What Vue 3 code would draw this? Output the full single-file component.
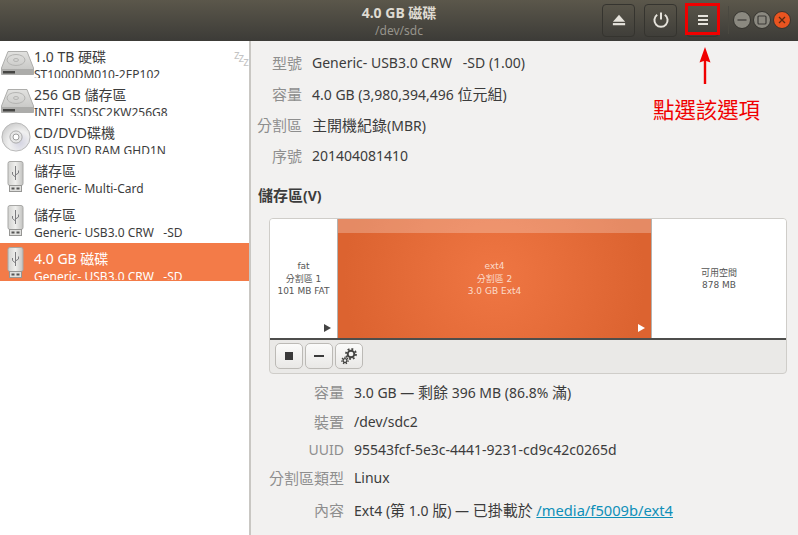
<template>
  <div class="window">
    <!-- title bar -->
    <header class="titlebar">
      <div></div>
      <div class="title">
        <div class="title-main">4.0 GB 磁碟</div>
        <div class="title-sub">/dev/sdc</div>
      </div>
      <div class="actions">
        <button class="hbtn">
          <svg width="14" height="14" viewBox="0 0 16 16"><path d="M8 2 15 10H1z" fill="#e6e3dc"/><rect x="1" y="11.5" width="14" height="2.5" fill="#e6e3dc"/></svg>
        </button>
        <button class="hbtn">
          <svg width="18" height="18" viewBox="0 0 18 18" fill="none" stroke="#e6e3dc" stroke-width="2"><path d="M5.2 3.8a6.6 6.6 0 1 0 7.6 0"/><path d="M9 1.5v7"/></svg>
        </button>
        <button class="hbtn">
          <svg width="12" height="12" viewBox="0 0 12 12" fill="#e6e3dc"><rect x="1" y="1" width="10" height="2"/><rect x="1" y="5" width="10" height="2"/><rect x="1" y="9" width="10" height="2"/></svg>
        </button>
        <span class="sep"></span>
        <span class="wbtn">
          <svg width="10" height="10" viewBox="0 0 10 10"><rect x="0.5" y="4.4" width="9" height="1.2" fill="#3c3b37"/></svg>
        </span>
        <span class="wbtn">
          <svg width="10" height="10" viewBox="0 0 10 10" fill="none" stroke="#3c3b37" stroke-width="1.2"><rect x="1" y="1" width="8" height="8" rx="1"/></svg>
        </span>
        <span class="wbtn close">
          <svg width="10" height="10" viewBox="0 0 10 10" stroke="#5a2a12" stroke-width="1.3"><path d="M2 2l6 6M8 2l-6 6"/></svg>
        </span>
      </div>
    </header>

    <div class="body">
      <!-- drive list -->
      <aside class="sidebar">
        <div
          v-for="d in drives"
          :key="d.name + d.sub"
          class="drive"
          :class="{ selected: d.selected, tall: d.tall }"
        >
          <div class="slot">
            <svg v-if="d.icon === 'hdd'" class="hdd" width="33" height="24" viewBox="0 0 33 24">
              <defs>
                <linearGradient id="hddTop" x1="0" y1="0" x2="0" y2="1"><stop offset="0" stop-color="#e2e2e0"/><stop offset="1" stop-color="#c2c2c0"/></linearGradient>
              </defs>
              <path d="M7 .5h19L32.5 17v6.5H.5V17z" fill="url(#hddTop)" stroke="#adadab"/>
              <ellipse cx="15" cy="9" rx="9" ry="5.5" fill="none" stroke="#b4b4b2"/>
              <ellipse cx="15" cy="9" rx="2.5" ry="1.5" fill="none" stroke="#b4b4b2"/>
              <rect x="1" y="18" width="31" height="5" fill="#acacaa"/>
              <rect x="2" y="20" width="12" height="2.5" fill="#454543"/>
            </svg>
            <svg v-else-if="d.icon === 'cd'" class="cd" width="30" height="30" viewBox="0 0 32 32">
              <defs>
                <radialGradient id="cdDisc" cx="0.65" cy="0.7" r="0.8"><stop offset="0" stop-color="#d4d4e2"/><stop offset="0.5" stop-color="#f0f0f0"/><stop offset="1" stop-color="#c8c8c8"/></radialGradient>
              </defs>
              <circle cx="16" cy="16" r="15" fill="url(#cdDisc)" stroke="#b4b4b4"/>
              <circle cx="16" cy="16" r="6.5" fill="#e6e6e6" stroke="#a6a6a6"/>
              <circle cx="16" cy="16" r="3.2" fill="#fff" stroke="#969696"/>
            </svg>
            <svg v-else class="usb" width="17" height="31" viewBox="0 0 17 31">
              <defs>
                <linearGradient id="usbBody" x1="0" y1="0" x2="1" y2="0"><stop offset="0" stop-color="#d2d2d0"/><stop offset="0.5" stop-color="#efefed"/><stop offset="1" stop-color="#c2c2c0"/></linearGradient>
              </defs>
              <rect x="1" y=".5" width="15" height="24" rx="2" fill="url(#usbBody)" stroke="#a8a8a6"/>
              <path d="M8.5 5v14M8.5 16l-3-2.5V11M8.5 14l3-2V9.5" fill="none" stroke="#7c7c7f"/>
              <rect x="2.5" y="24.5" width="12" height="6" fill="#e0e0de" stroke="#969694"/>
              <rect x="4.5" y="26.5" width="3" height="2" fill="#555"/>
              <rect x="9.5" y="26.5" width="3" height="2" fill="#555"/>
            </svg>
          </div>
          <div class="drive-text">
            <div class="drive-name">{{ d.name }}</div>
            <div class="drive-sub">{{ d.sub }}</div>
          </div>
          <span v-if="d.sleep" class="zzz"><i>z</i><i>z</i><i>z</i></span>
        </div>
      </aside>

      <main class="main">
        <div class="info">
          <template v-for="r in driveInfo" :key="r[0]">
            <div class="label"><span v-for="(p, i) in runs(r[0])" :key="i" :class="{ cjk: i % 2 }">{{ p }}</span></div>
            <div class="value"><span v-for="(p, i) in runs(r[1])" :key="i" :class="{ cjk: i % 2 }">{{ p }}</span></div>
          </template>
        </div>

        <h3 class="heading"><span class="cjk">儲存區</span>(V)</h3>

        <section class="volumes">
          <div class="bar">
            <div class="part fat">
              <div class="fs">fat</div>
              <div>分割區 1</div>
              <div>101 MB FAT</div>
              <span class="tri"></span>
            </div>
            <div class="part ext">
              <div class="used"></div>
              <div class="fs">ext4</div>
              <div>分割區 2</div>
              <div>3.0 GB Ext4</div>
              <span class="tri white"></span>
            </div>
            <div class="part free">
              <div>可用空間</div>
              <div>878 MB</div>
            </div>
          </div>
          <div class="tools">
            <button class="tool"><span class="stop"></span></button>
            <button class="tool"><span class="minus"></span></button>
            <button class="tool">
              <svg width="18" height="18" viewBox="0 0 18 18" fill="none" stroke="#454543">
                <circle cx="11" cy="7" r="3.3" stroke-width="1.9"/>
                <circle cx="11" cy="7" r="5" stroke-width="1.8" stroke-dasharray="1.9 2"/>
                <circle cx="5" cy="13.5" r="1.9" stroke-width="1.3"/>
                <circle cx="5" cy="13.5" r="3.2" stroke-width="1.3" stroke-dasharray="1.4 1.4"/>
              </svg>
            </button>
          </div>
        </section>

        <div class="info details">
          <template v-for="r in partInfo" :key="r[0]">
            <div class="label"><span v-for="(p, i) in runs(r[0])" :key="i" :class="{ cjk: i % 2 }">{{ p }}</span></div>
            <div class="value"><span v-for="(p, i) in runs(r[1])" :key="i" :class="{ cjk: i % 2 }">{{ p }}</span><a v-if="r[2]" class="link" href="#">{{ r[2] }}</a></div>
          </template>
        </div>
      </main>
    </div>

    <!-- red annotation added on top of the screenshot -->
    <span class="mark"></span>
    <svg class="arrow" width="14" height="38" viewBox="0 0 14 38"><path d="M7 0 12.5 15.5 8.2 14V37H5.8V14L1.5 15.5z" fill="#f00000"/></svg>
    <span class="note">點選該選項</span>
  </div>
</template>

<script setup>
const drives = [
  { name: '1.0 TB 硬碟', sub: 'ST1000DM010-2EP102', icon: 'hdd', sleep: true },
  { name: '256 GB 儲存區', sub: 'INTEL SSDSC2KW256G8', icon: 'hdd' },
  { name: 'CD/DVD碟機', sub: 'ASUS DVD RAM GHD1N', icon: 'cd' },
  { name: '儲存區', sub: 'Generic- Multi-Card', icon: 'usb', tall: true },
  { name: '儲存區', sub: 'Generic- USB3.0 CRW   -SD', icon: 'usb', tall: true },
  { name: '4.0 GB 磁碟', sub: 'Generic- USB3.0 CRW   -SD', icon: 'usb', selected: true }
]

const driveInfo = [
  ['型號', 'Generic- USB3.0 CRW   -SD (1.00)'],
  ['容量', '4.0 GB (3,980,394,496 位元組)'],
  ['分割區', '主開機紀錄(MBR)'],
  ['序號', '201404081410']
]

const partInfo = [
  ['容量', '3.0 GB — 剩餘 396 MB (86.8% 滿)'],
  ['裝置', '/dev/sdc2'],
  ['UUID', '95543fcf-5e3c-4441-9231-cd9c42c0265d'],
  ['分割區類型', 'Linux'],
  ['內容', 'Ext4 (第 1.0 版) — 已掛載於 ', '/media/f5009b/ext4']
]

// Han characters run a bit larger than the latin text, so split them out
const runs = (text) => text.split(/([\u2E80-\u9FFF]+)/)
</script>

<style>
html, body { margin: 0; overflow: hidden; }
</style>

<style scoped>
.window {
  position: relative;
  width: 798px;
  height: 535px;
  display: flex;
  flex-direction: column;
  overflow: hidden;
  background: #f2f1f0;
  color: #3c3c3c;
  font-family: "Noto Sans", "Noto Sans CJK TC", sans-serif;
  font-size: 14px;
}

.titlebar {
  height: 41px;
  flex: none;
  display: grid;
  grid-template-columns: 1fr auto 1fr;
  align-items: center;
  background: linear-gradient(#5b574b, #3c3b37);
}
.title { text-align: center; }
.title-main { color: #dfdbd2; font-weight: 700; font-size: 14px; line-height: 20px; }
.title-sub { color: #97948c; font-size: 12px; line-height: 16px; }

.actions {
  display: flex;
  align-items: center;
  justify-content: flex-end;
  padding-right: 7px;
  margin-bottom: 1px;
}
.hbtn {
  width: 33px;
  height: 33px;
  margin-right: 9px;
  padding: 0;
  display: flex;
  align-items: center;
  justify-content: center;
  border: 1px solid #35342f;
  border-radius: 4px;
  background: transparent;
}
.sep { width: 1px; height: 28px; margin-right: 2px; background: #4a4840; }
.wbtn {
  box-sizing: border-box;
  width: 18px;
  height: 18px;
  margin-left: 2px;
  display: flex;
  align-items: center;
  justify-content: center;
  border-radius: 50%;
  background: #8b8980;
  border: 1px solid #35342f;
}
.close { background: #e95420; }

.body { flex: 1; display: flex; min-height: 0; }

.sidebar {
  width: 249px;
  flex: none;
  background: #fff;
  border-right: 2px solid #c9c7c3;
}
.drive {
  position: relative;
  height: 38px;
  display: flex;
  overflow: hidden;
}
.drive.tall { height: 44px; }
.drive.selected { background: #f37b48; color: #fff; }
.slot { width: 34px; flex: none; }
.slot svg { display: block; }
.hdd { margin: 10px 0 0 1px; }
.cd { margin: 5px 0 0 1px; }
.usb { margin: 6px 0 0 7px; }
.selected .usb { margin-top: 4px; }
.drive-text { height: 31px; margin-top: 6px; overflow: hidden; white-space: pre; }
.tall .drive-text { height: auto; }
.drive-name { font-size: 14px; line-height: 20px; }
.drive-sub { font-size: 12px; line-height: 16px; }
.zzz {
  position: absolute;
  left: 234px;
  top: 9px;
  display: flex;
  color: #c4c4c4;
  font-size: 12px;
  line-height: 10px;
}
.zzz i { font-style: normal; width: 4.6px; }
.zzz i:nth-child(2) { margin-top: 3px; }
.zzz i:nth-child(3) { margin-top: 7px; }

.main { flex: 1; min-width: 0; padding: 6px 11px 0 6px; }

.cjk { font-size: 15px; }

.info {
  display: grid;
  grid-template-columns: 45px 1fr;
  column-gap: 10px;
  grid-auto-rows: 31px;
  align-items: center;
}
.label { text-align: right; color: #8e8e8e; }
.value { white-space: pre; }

.heading { margin: 14px 0 12px 1px; font-size: 14px; line-height: 20px; font-weight: 700; }

.volumes {
  margin-left: 12px;
  height: 156px;
  display: flex;
  flex-direction: column;
  box-sizing: border-box;
  border: 1px solid #cfcdc9;
  border-radius: 4px;
  background: #eae9e7;
  overflow: hidden;
}
.bar {
  height: 119px;
  flex: none;
  display: flex;
  border-bottom: 2px solid #4e4e4c;
  background: #fff;
  font-family: "DejaVu Sans", "Noto Sans CJK TC", sans-serif;
  font-size: 9px;
  line-height: 12px;
  color: #555;
  text-align: center;
}
.part {
  position: relative;
  display: flex;
  flex-direction: column;
  justify-content: center;
  box-sizing: border-box;
}
.fs { margin-bottom: 1px; }
.fat { width: 68px; border-right: 1px solid #b4b3b1; }
.ext {
  width: 314px;
  color: #fbdccb;
  border-right: 1px solid #b4b3b1;
  background: radial-gradient(circle at center, #ef7643, #dc6330 90%);
}
.free { flex: 1; }
.used {
  position: absolute;
  left: 0;
  right: 0;
  top: 0;
  height: 14px;
  background: rgba(255, 255, 255, .25);
}
.tri {
  position: absolute;
  right: 6px;
  bottom: 6px;
  border-left: 7px solid #444;
  border-top: 4px solid transparent;
  border-bottom: 4px solid transparent;
}
.tri.white { border-left-color: #fff; }

.tools { display: flex; gap: 2px; padding: 3px 0 0 5px; }
.tool {
  width: 28px;
  height: 26px;
  padding: 0;
  display: flex;
  align-items: center;
  justify-content: center;
  border: 1px solid #bcbab6;
  border-radius: 5px;
  background: linear-gradient(#fbfbfa, #e9e8e6);
}
.stop { width: 8px; height: 8px; background: #3a3a3a; }
.minus { width: 10px; height: 2px; background: #3a3a3a; }

.details {
  margin-top: 2px;
  grid-template-columns: 87px 1fr;
  grid-template-rows: 30px 30px 26px 30px 34px;
}
.link { color: #0e8fb8; text-decoration: underline; font-size: 14.7px; }

.mark {
  position: absolute;
  left: 685px;
  top: 3px;
  width: 29px;
  height: 26px;
  border: 3px solid #f00000;
}
.arrow { position: absolute; left: 698px; top: 47px; }
.note {
  position: absolute;
  left: 653px;
  top: 95px;
  color: #f00000;
  font-size: 21.4px;
  line-height: 30px;
}
</style>
